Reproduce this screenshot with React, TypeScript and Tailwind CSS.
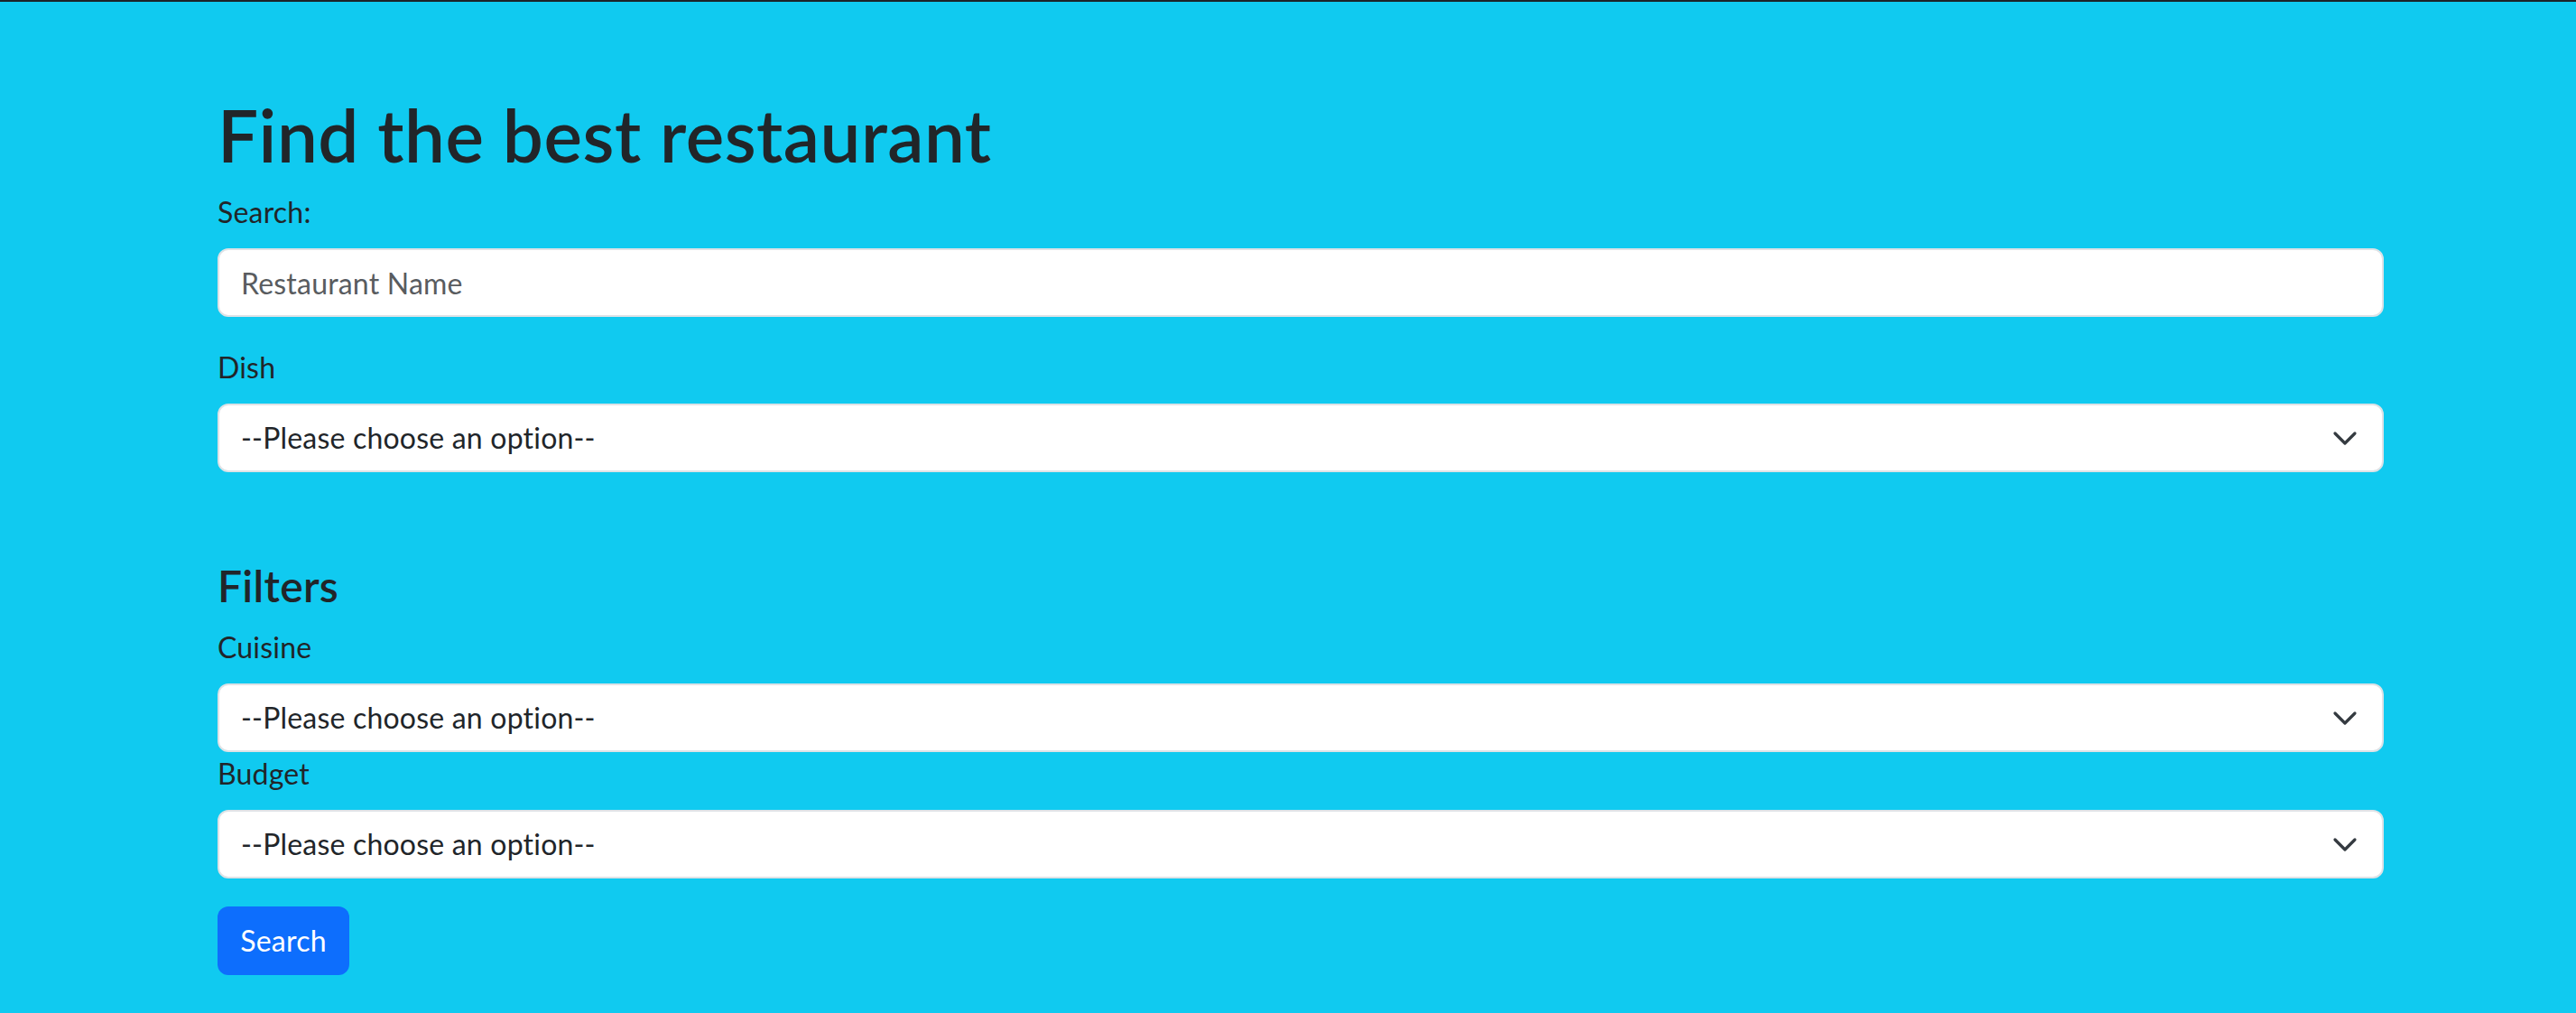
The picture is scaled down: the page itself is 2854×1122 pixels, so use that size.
import React from "react";

const font = { fontFamily: "Lato, 'Noto Sans', sans-serif" };

function Chevron() {
  return (
    <svg
      className="pointer-events-none absolute right-[27px] top-1/2 -translate-y-1/2"
      width="32"
      height="24"
      viewBox="0 0 16 12"
      fill="none"
    >
      <path d="M2.5 3.5l5.5 5.5 5.5-5.5" stroke="#343a40" strokeWidth="1.6" strokeLinecap="round" strokeLinejoin="round" />
    </svg>
  );
}

function Select({ className = "" }: { className?: string }) {
  return (
    <div className={"relative " + className}>
      <select
        className="block h-[76px] w-full appearance-none rounded-[12px] border-2 border-[#dee2e6] bg-white px-[24px] text-[32px] leading-[48px] tracking-[0.2px] text-[#212529] outline-none"
        style={font}
        defaultValue=""
      >
        <option value="">--Please choose an option--</option>
      </select>
      <Chevron />
    </div>
  );
}

export default function App() {
  return (
    <div className="min-h-screen border-t-2 border-[#1c2329] bg-[#10caf0] text-[#212529]" style={font}>
      <div className="pl-[241px] pr-[213px] pt-[99px]">
        <h1 className="mb-[14px] text-[80px] font-semibold leading-[96px] tracking-[0.5px]">Find the best restaurant</h1>

        <label className="mb-[16px] block text-[32px] leading-[48px] tracking-[0.2px]">Search:</label>
        <input
          type="text"
          placeholder="Restaurant Name"
          className="mb-[32px] block h-[76px] w-full rounded-[12px] border-2 border-[#dee2e6] bg-white px-[24px] text-[32px] tracking-[0.2px] text-[#212529] outline-none placeholder:text-[#595c5f]"
          style={font}
        />

        <label className="mb-[16px] block text-[32px] leading-[48px] tracking-[0.2px]">Dish</label>
        <Select />

        <h4 className="mb-[15px] mt-[97px] text-[48px] font-semibold leading-[58px] tracking-[0.3px]">Filters</h4>

        <label className="mb-[16px] block text-[32px] leading-[48px] tracking-[0.2px]">Cuisine</label>
        <Select />
        <label className="mb-[16px] block text-[32px] leading-[48px] tracking-[0.2px]">Budget</label>
        <Select />

        <button
          className="mt-[31px] flex h-[76px] w-[146px] items-center justify-center rounded-[12px] bg-[#0d6efd] text-[32px] leading-[48px] tracking-[0.2px] text-white"
          style={font}
        >
          Search
        </button>
      </div>
    </div>
  );
}
